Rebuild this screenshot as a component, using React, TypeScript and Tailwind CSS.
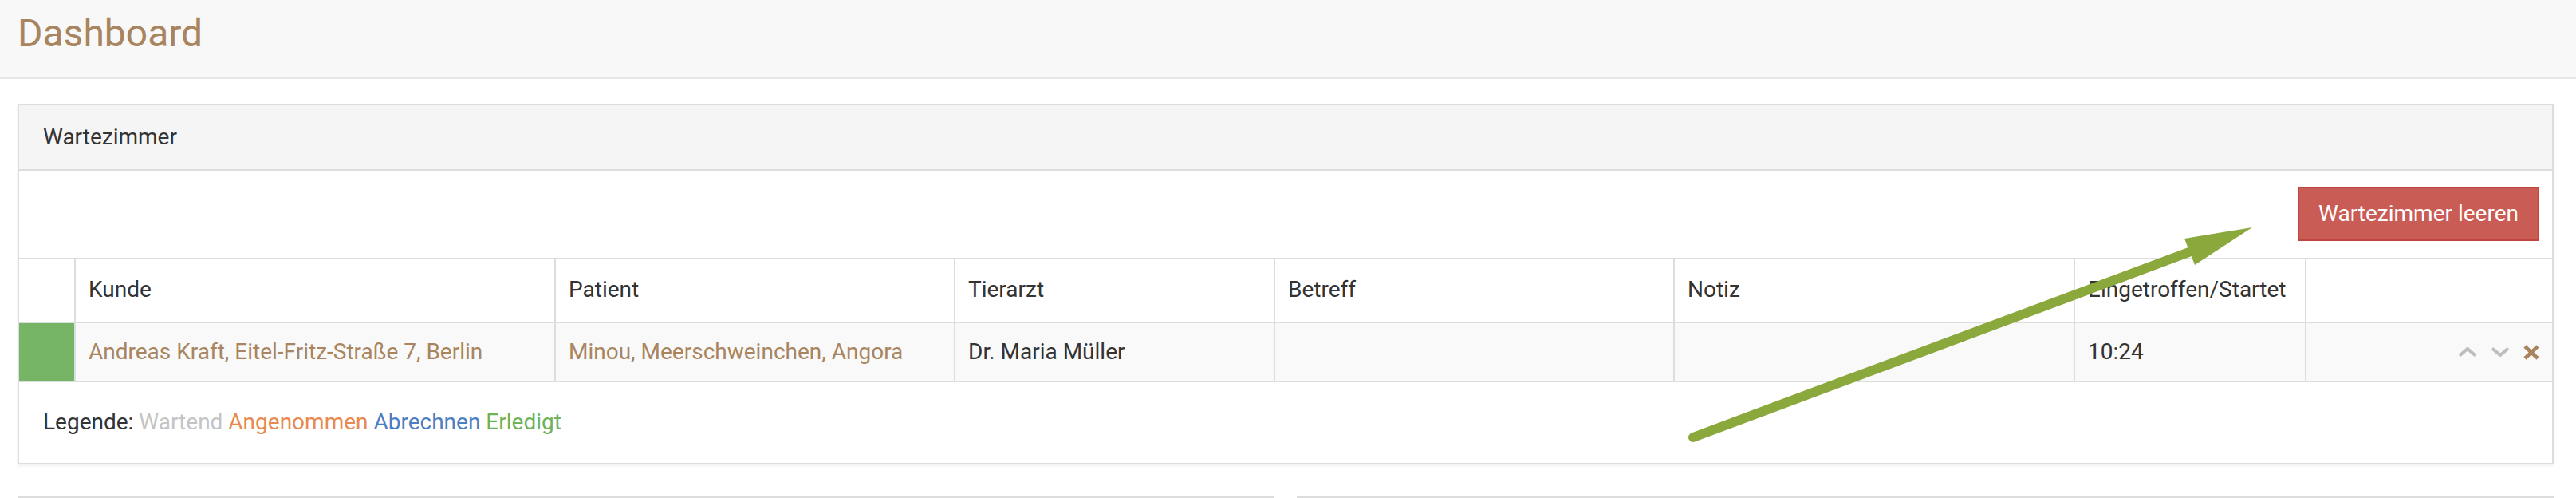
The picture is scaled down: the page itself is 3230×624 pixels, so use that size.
import React from "react";

const cols = "grid grid-cols-[69px_602px_501px_401px_501px_502px_290px_310px]";
const headCell = "border-l-2 border-[#dddddd] px-[16px] pt-[18px] pb-[20px]";
const bodyCell = "border-l-2 border-[#dddddd] px-[16px] py-[16px]";

function ChevronUp() {
  return (
    <svg width="24" height="12" viewBox="0 0 24 12" fill="none">
      <polyline points="2,10.5 12,2 22,10.5" stroke="#bdbdbd" strokeWidth="4" />
    </svg>
  );
}

function ChevronDown() {
  return (
    <svg width="24" height="12" viewBox="0 0 24 12" fill="none">
      <polyline points="2,1.5 12,10 22,1.5" stroke="#bdbdbd" strokeWidth="4" />
    </svg>
  );
}

function Cross() {
  return (
    <svg width="20" height="19" viewBox="0 0 20 19" fill="none">
      <line x1="2" y1="2" x2="18" y2="17" stroke="#a8855f" strokeWidth="4.5" />
      <line x1="18" y1="2" x2="2" y2="17" stroke="#a8855f" strokeWidth="4.5" />
    </svg>
  );
}

export default function App() {
  return (
    <div className="relative min-h-[624px] overflow-hidden bg-white font-['Roboto','Liberation_Sans',sans-serif] text-[28px] leading-[40px] text-[#333333]">
      <header className="h-[99px] border-b-2 border-[#e7e7e7] bg-[#f8f8f8] pl-[22px] pt-[14px]">
        <h1 className="text-[48px] leading-[56px] font-normal text-[#a8855f]">Dashboard</h1>
      </header>

      <main className="pl-[22px] pr-[28px] pt-[31px]">
        <section className="border-2 border-[#dddddd] bg-white shadow-[0_2px_3px_rgba(0,0,0,0.06)]">
          <div className="border-b-2 border-[#dddddd] bg-[#f5f5f5] px-[30px] py-[20px]">Wartezimmer</div>

          <div className="flex justify-end pr-[16px] pt-[20px] pb-[21px]">
            <button className="border-2 border-[#c2443e] bg-[#c95c55] px-[24px] py-[12px] text-[28px] leading-[40px] text-white">
              Wartezimmer leeren
            </button>
          </div>

          <div className={`${cols} border-y-2 border-[#dddddd]`}>
            <div />
            <div className={headCell}>Kunde</div>
            <div className={headCell}>Patient</div>
            <div className={headCell}>Tierarzt</div>
            <div className={headCell}>Betreff</div>
            <div className={headCell}>Notiz</div>
            <div className={headCell}>Eingetroffen/Startet</div>
            <div className={headCell} />
          </div>

          <div className={`${cols} border-b-2 border-[#dddddd] bg-[#f9f9f9]`}>
            <div className="bg-[#77b566]" />
            <div className={`${bodyCell} text-[#a8855f]`}>Andreas Kraft, Eitel-Fritz-Straße 7, Berlin</div>
            <div className={`${bodyCell} text-[#a8855f]`}>Minou, Meerschweinchen, Angora</div>
            <div className={bodyCell}>Dr. Maria Müller</div>
            <div className={bodyCell} />
            <div className={bodyCell} />
            <div className={bodyCell}>10:24</div>
            <div className="flex items-center justify-end gap-[17px] border-l-2 border-[#dddddd] px-[16px]">
              <ChevronUp />
              <ChevronDown />
              <Cross />
            </div>
          </div>

          <div className="px-[30px] pt-[30px] pb-[31px]">
            Legende: <span className="text-[#c4c4c4]">Wartend</span>{" "}
            <span className="text-[#e8894f]">Angenommen</span>{" "}
            <span className="text-[#4a7fc2]">Abrechnen</span>{" "}
            <span className="text-[#6db35e]">Erledigt</span>
          </div>
        </section>

        <div className="mt-[40px] grid grid-cols-2 gap-[28px]">
          <div className="h-[120px] border-2 border-[#dddddd] bg-white" />
          <div className="h-[120px] border-2 border-[#dddddd] bg-white" />
        </div>
      </main>

      <svg
        className="pointer-events-none absolute left-0 top-0"
        width="3230"
        height="624"
        viewBox="0 0 3230 624"
      >
        <line x1="2123" y1="548" x2="2758" y2="311" stroke="#8aa83b" strokeWidth="12" strokeLinecap="round" />
        <polygon points="2824,285 2739,299 2752,332" fill="#8aa83b" />
      </svg>
    </div>
  );
}
